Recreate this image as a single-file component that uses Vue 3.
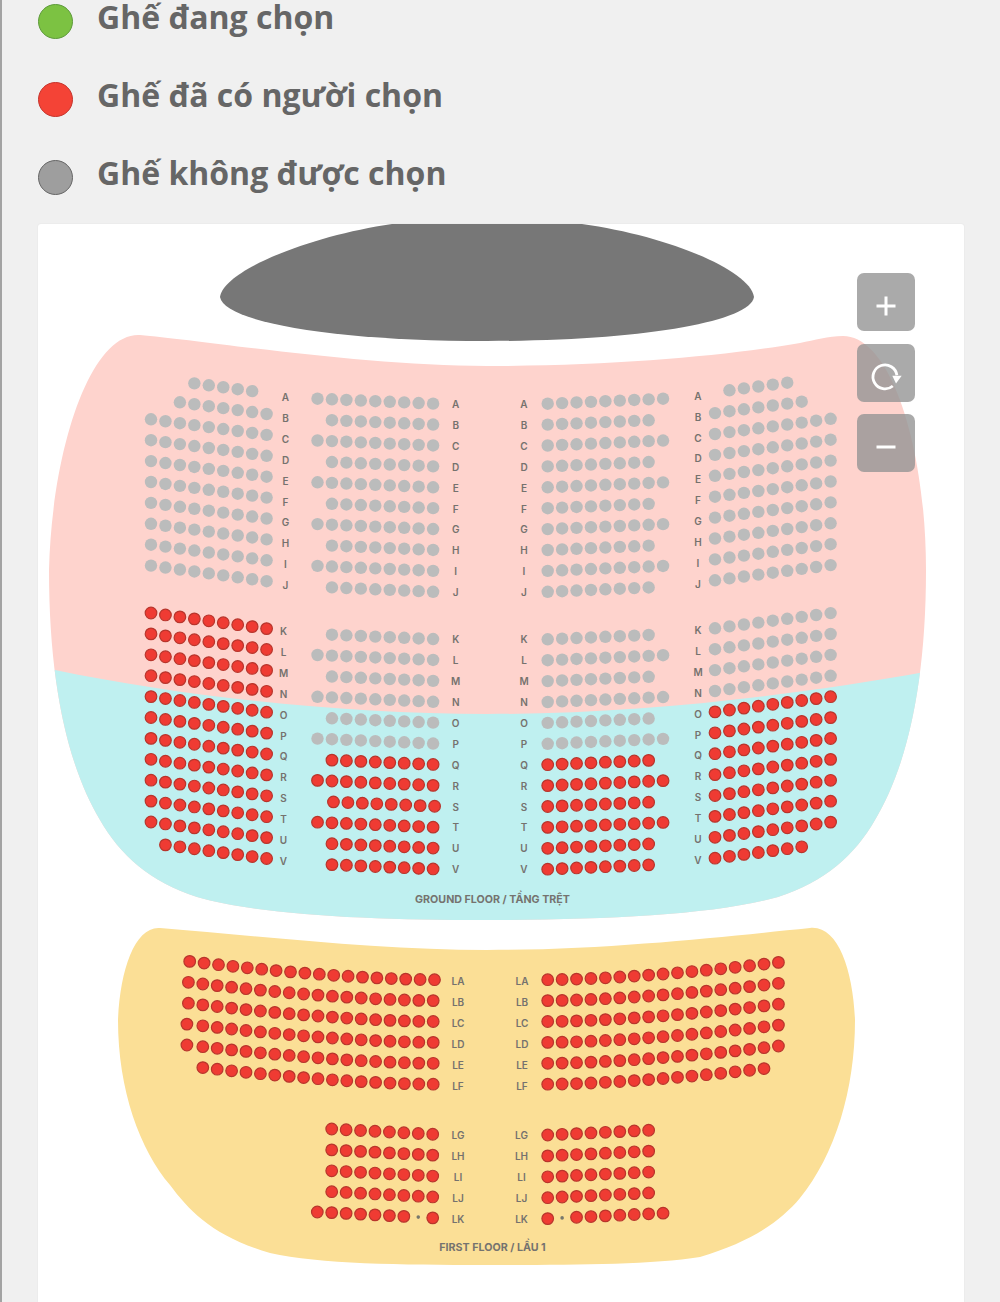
<script setup>
const STEP = 20.9
const letters = 'ABCDEFGHIJKLMNOPQRSTUV'.split('')

const legend = [
  { label: 'Ghế đang chọn', kind: 'picked' },
  { label: 'Ghế đã có người chọn', kind: 'taken' },
  { label: 'Ghế không được chọn', kind: 'off' }
]

const groundOutline = 'M49 570 C52 450 90 332 140 335 C200 340 360 366 487 366 C620 366 730 355 800 343 C815 340 828 336 843 336 C892 336 926 450 926 570 C926 690 905 770 875 820 C855 855 825 882 778 897 C715 915 605 920 487 920 C370 920 260 915 197 897 C150 882 120 855 100 820 C70 770 49 690 49 570 Z'

const seats = []
const labels = []

const addSeat = (x, y, kind) => seats.push({ x, y, kind })
const addLabel = (x, y, text) => labels.push({ x, y, text })

// ground floor, outer left block
letters.forEach((name, i) => {
  const upper = i < 10
  const top = upper ? 419.3 + (i - 2) * STEP : 613 + (i - 10) * STEP
  let from = 0
  let to = 8
  if (name === 'A') { from = 3; to = 7 }
  if (name === 'B') { from = 2 }
  if (name === 'V') { from = 1 }
  for (let c = from; c <= to; c++) {
    addSeat(151 + 14.45 * c, top + 1.95 * c, upper ? 'off' : 'taken')
  }
  addLabel(upper ? 285.5 : 283.5, (upper ? 397 : 631) + (upper ? i : i - 10) * STEP, name)
})

// ground floor, the two centre blocks
const nineSeats = ['A', 'C', 'E', 'G', 'I', 'L', 'N', 'P', 'R', 'T']
letters.forEach((name, i) => {
  const upper = i < 10
  const row = upper ? i : i - 10
  const kind = i < 16 ? 'off' : 'taken'
  const wide = nineSeats.includes(name)
  const nudge = name === 'S' ? 1.5 : 0
  for (let c = wide ? 0 : 1; c <= 8; c++) {
    addSeat(317.5 + 14.45 * c + nudge, (upper ? 398.7 : 634.1) + row * STEP + 0.62 * c, kind)
  }
  for (let c = 0; c < (wide ? 9 : 8); c++) {
    addSeat(547.7 + 14.42 * c, (upper ? 403.7 : 639.3) + row * STEP - 0.62 * c, kind)
  }
  addLabel(455.7, (upper ? 404 : 639.3) + row * STEP, name)
  addLabel(524, (upper ? 404 : 639.3) + row * STEP, name)
})

// ground floor, outer right block
letters.forEach((name, i) => {
  const upper = i < 10
  const top = upper ? 434 + (i - 2) * STEP : 628.3 + (i - 10) * STEP
  let from = 0
  let to = 8
  if (name === 'A') { from = 1; to = 5 }
  if (name === 'B') { to = 6 }
  if (name === 'V') { to = 6 }
  for (let c = from; c <= to; c++) {
    addSeat(715 + 14.45 * c, top - 1.9 * c, i < 14 ? 'off' : 'taken')
  }
  addLabel(698, (upper ? 395.7 : 630) + (upper ? i : i - 10) * STEP, name)
})

// first floor, upper rows curve up towards the sides
const floorRows = ['LA', 'LB', 'LC', 'LD', 'LE', 'LF']
floorRows.forEach((name, r) => {
  const y = 979.7 + r * STEP
  const dx = r === 0 ? 0 : -1.3
  for (let c = r === 5 ? 1 : 0; c <= 17; c++) {
    const d = 17 - c
    const edge = c === 0 && r > 2 ? -1.5 : 0
    addSeat(189.7 + 14.4 * c + dx + edge, y - 18.3 * Math.pow(d / 17, 1.6), 'taken')
  }
  const last = r === 5 ? 15 : 16
  for (let c = 0; c <= last; c++) {
    addSeat(547.7 + 14.42 * c, y - 17.3 * Math.pow(c / 16, 1.6), 'taken')
  }
  addLabel(458, 981 + r * STEP, name)
  addLabel(522, 981 + r * STEP, name)
})

// first floor, lower rows
const lowerRows = ['LG', 'LH', 'LI', 'LJ', 'LK']
lowerRows.forEach((name, r) => {
  const last = r === 4
  for (let c = 0; c <= 7; c++) {
    const x = 331.7 + 14.43 * c
    const y = 1129 + r * STEP + 0.75 * c
    if (last && c === 6) addSeat(x, y, 'broken')
    else addSeat(x, y, 'taken')
  }
  if (last) addSeat(317.3, 1212, 'taken')
  for (let c = 0; c <= (last ? 8 : 7); c++) {
    const x = 547.7 + 14.42 * c
    const y = 1135 + r * STEP - 0.68 * c
    addSeat(x, y, last && c === 1 ? 'broken' : 'taken')
  }
  addLabel(458, 1135.3 + r * STEP, name)
  addLabel(521.5, 1135.3 + r * STEP, name)
})

const radius = { off: 6.2, taken: 5.8, broken: 1.8 }
</script>

<template>
  <div class="page">
    <ul class="legend">
      <li v-for="item in legend" :key="item.kind" class="legend-item">
        <span :class="['legend-dot', item.kind]"></span>
        <span class="legend-text">{{ item.label }}</span>
      </li>
    </ul>

    <div class="card">
      <svg class="plan" width="926" height="1078" viewBox="38 224 926 1078">
        <defs>
          <clipPath id="lower-half">
            <path d="M0 660 L55 670 C180 696 340 714 487 714 C640 714 790 696 925 672 L1000 660 V1000 H0 Z" />
          </clipPath>
        </defs>

        <path class="stage" d="M220 297 C224 270 310 236 392 224 L582 224 C668 236 750 270 754 297 C750 322 640 341 487 341 C334 341 224 322 220 297 Z" />

        <path class="zone-pink" :d="groundOutline" />
        <path class="zone-blue" clip-path="url(#lower-half)" :d="groundOutline" />
        <path
          class="zone-yellow"
          d="M118 1020 C120 970 135 926 160 928 C260 936 380 950 487 950 C610 950 730 936 810 928 C838 925 853 970 855 1020 C855 1090 835 1155 800 1198 C780 1222 750 1242 700 1257 C650 1265 570 1265 487 1265 C400 1265 320 1264 270 1253 C215 1237 190 1212 170 1185 C140 1150 118 1090 118 1020 Z"
        />

        <circle
          v-for="(seat, i) in seats"
          :key="i"
          :class="['seat', seat.kind]"
          :cx="seat.x"
          :cy="seat.y"
          :r="radius[seat.kind]"
        />

        <text
          v-for="(label, i) in labels"
          :key="'l' + i"
          class="row-label"
          :x="label.x"
          :y="label.y"
        >{{ label.text }}</text>

        <text class="floor-label" x="492.5" y="899">GROUND FLOOR / TẦNG TRỆT</text>
        <text class="floor-label" x="492.5" y="1247">FIRST FLOOR / LẦU 1</text>
      </svg>

      <div class="controls">
        <button class="control" type="button" aria-label="Zoom in">
          <svg width="24" height="24" viewBox="0 0 24 24" fill="none" stroke="#fff" stroke-width="3">
            <path d="M12 2.5v19M2.5 12h19" />
          </svg>
        </button>
        <button class="control" type="button" aria-label="Reset">
          <svg width="36" height="36" viewBox="0 0 36 36" fill="none" stroke="#fff" stroke-width="2.8">
            <path d="M28.9 16.3 A12 12 0 1 0 24.8 27" />
            <path d="M24.3 16.8 L33.7 16.8 L28 24.5 Z" fill="#fff" stroke="none" />
          </svg>
        </button>
        <button class="control" type="button" aria-label="Zoom out">
          <svg width="24" height="24" viewBox="0 0 24 24" fill="none" stroke="#fff" stroke-width="3">
            <path d="M2.5 12h19" />
          </svg>
        </button>
      </div>
    </div>
  </div>
</template>

<style>
body {
  background: #f0f0f0;
}
</style>

<style scoped>
.page {
  height: 1302px;
  overflow: hidden;
  box-sizing: border-box;
  padding-left: 36px;
  border-left: 2px solid #a3a3a3;
  background: #f0f0f0;
  font-family: 'Open Sans', 'Noto Sans', sans-serif;
}

.legend {
  list-style: none;
  margin: 0 0 26px;
  padding: 0;
  display: flex;
  flex-direction: column;
  gap: 36px;
}

.legend-item {
  height: 42px;
  display: flex;
  align-items: center;
  gap: 24px;
}

.legend-dot {
  width: 35px;
  height: 35px;
  box-sizing: border-box;
  border-radius: 50%;
  border: 1.5px solid;
}

.legend-dot.picked {
  background: #7cc242;
  border-color: #5d9a3a;
}

.legend-dot.taken {
  background: #f44336;
  border-color: #c5332b;
}

.legend-dot.off {
  background: #9e9e9e;
  border-color: #666;
}

.legend-text {
  margin-top: -8px;
  color: #666;
  font-size: 32px;
  font-weight: 700;
  line-height: 34px;
  white-space: nowrap;
}

.card {
  position: relative;
  width: 926px;
  height: 1078px;
  background: #fff;
  border-radius: 3px 3px 0 0;
  box-shadow: 0 0 2px rgba(0, 0, 0, 0.07);
  overflow: hidden;
}

.plan {
  display: block;
}

.stage {
  fill: #777;
}

.zone-pink {
  fill: #fed3cd;
}

.zone-blue {
  fill: #bff0f0;
}

.zone-yellow {
  fill: #fbdf96;
}

.seat.off {
  fill: #bbbcbc;
}

.seat.taken {
  fill: #ef3b33;
  stroke: #b8352c;
  stroke-width: 1.2;
}

.seat.broken {
  fill: #77786c;
}

.row-label {
  fill: #75726e;
  font-family: Inter, 'Liberation Sans', sans-serif;
  font-size: 10px;
  font-weight: 600;
  text-anchor: middle;
  dominant-baseline: central;
}

.floor-label {
  fill: #75736f;
  font-family: Inter, 'Liberation Sans', sans-serif;
  font-size: 10.7px;
  font-weight: 700;
  text-anchor: middle;
  dominant-baseline: central;
}

.controls {
  position: absolute;
  top: 49px;
  left: 819px;
  display: flex;
  flex-direction: column;
  gap: 12.5px;
}

.control {
  box-sizing: border-box;
  width: 58px;
  height: 58px;
  padding: 8px 0 0;
  border: none;
  border-radius: 7px;
  background: rgba(149, 149, 149, 0.8);
  display: flex;
  align-items: center;
  justify-content: center;
  cursor: pointer;
}
</style>
